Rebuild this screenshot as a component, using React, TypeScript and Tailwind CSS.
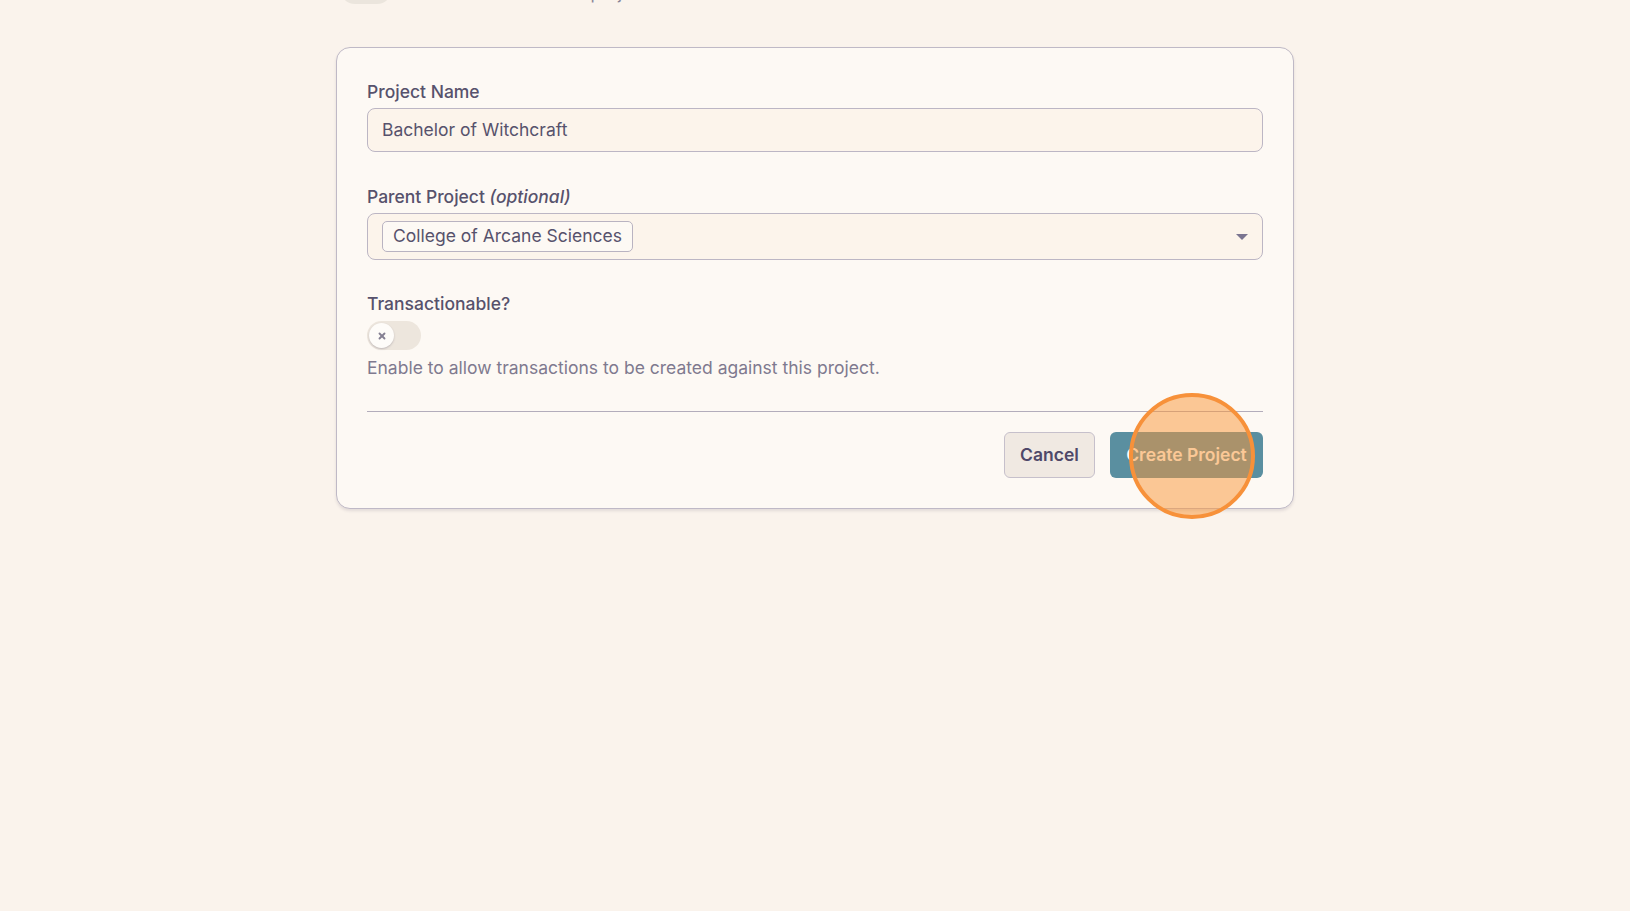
import { X } from "lucide-react";

const Toggle = () => (
  <div className="w-[54px] h-[29px] rounded-full bg-[#ede6dd] p-[2px] flex items-center">
    <div className="w-[25px] h-[25px] rounded-full bg-[#fefcf9] shadow-[0_1px_2px_rgba(60,50,80,0.25)] flex items-center justify-center">
      <X size={10} strokeWidth={4.5} className="text-[#858093]" />
    </div>
  </div>
);

const Label = ({ children }: { children: React.ReactNode }) => (
  <label className="block pt-[2px] text-[17.5px] leading-[24px] font-medium text-[#57526c] mb-[4px]">
    {children}
  </label>
);

const App = () => {
  return (
    <div className="min-h-screen bg-[#faf3ec] font-['Inter',sans-serif] overflow-hidden">
      <div className="w-[958px] mx-auto">
        {/* bottom of the previous row, scrolled off the top */}
        <div className="-mt-[26px] flex items-end gap-[17px] pl-[4px]">
          <div className="w-[52px] h-[30px] rounded-full bg-[#ebe5dd]" />
          <span className="text-[17.5px] leading-[22px] text-[#8a8599]">
            Enable to archive this project.
          </span>
        </div>

        <div className="relative mt-[43px] bg-[#fdf9f4] border border-[#bfb9c6] rounded-[14px] shadow-[0_2px_3px_rgba(60,50,80,0.12)] px-[30px] pt-[30px] pb-[30px]">
          <Label>Project Name</Label>
          <div className="h-[44px] rounded-[8px] border border-[#bcb6c4] bg-[#fcf4eb] px-[14px] flex items-center text-[17.5px] text-[#57526c]">
            Bachelor of Witchcraft
          </div>

          <div className="mt-[31px]">
            <Label>
              Parent Project <span className="italic">(optional)</span>
            </Label>
            <div className="h-[47px] rounded-[8px] border border-[#bcb6c4] bg-[#fcf4eb] pl-[14px] pr-[14px] flex items-center justify-between">
              <span className="h-[31px] px-[10px] rounded-[5px] border border-[#b9b3c1] bg-[#fdf9f4] flex items-center text-[17.5px] text-[#57526c]">
                College of Arcane Sciences
              </span>
              <svg width="12" height="6" viewBox="0 0 12 6">
                <path d="M0 0h12L6 6z" fill="#7a7490" />
              </svg>
            </div>
          </div>

          <div className="mt-[30px]">
            <div className="pt-[2px] text-[17.5px] leading-[24px] font-medium text-[#57526c] mb-[5px]">
              Transactionable?
            </div>
            <Toggle />
            <p className="mt-[6px] text-[17.5px] leading-[24px] text-[#7f7a8f]">
              Enable to allow transactions to be created against this project.
            </p>
          </div>

          <div className="mt-[31px] border-t border-[#b3adbb]" />

          <div className="mt-[20px] flex justify-end gap-[15px]">
            <button className="h-[46px] w-[91px] rounded-[6px] border border-[#c6c0cb] bg-[#f0e9e2] text-[17.5px] font-semibold text-[#4f4869]">
              Cancel
            </button>
            <div className="relative">
              <button className="h-[46px] w-[153px] rounded-[6px] bg-[#5a8fa0] text-[17.5px] font-semibold text-[#fdfaf6]">
                Create Project
              </button>
              <div className="absolute left-[19px] -top-[39px] w-[126px] h-[126px] rounded-full border-[4px] border-[#f7913a] bg-[rgba(249,150,54,0.5)] pointer-events-none" />
            </div>
          </div>
        </div>
      </div>
    </div>
  );
};

export default App;
